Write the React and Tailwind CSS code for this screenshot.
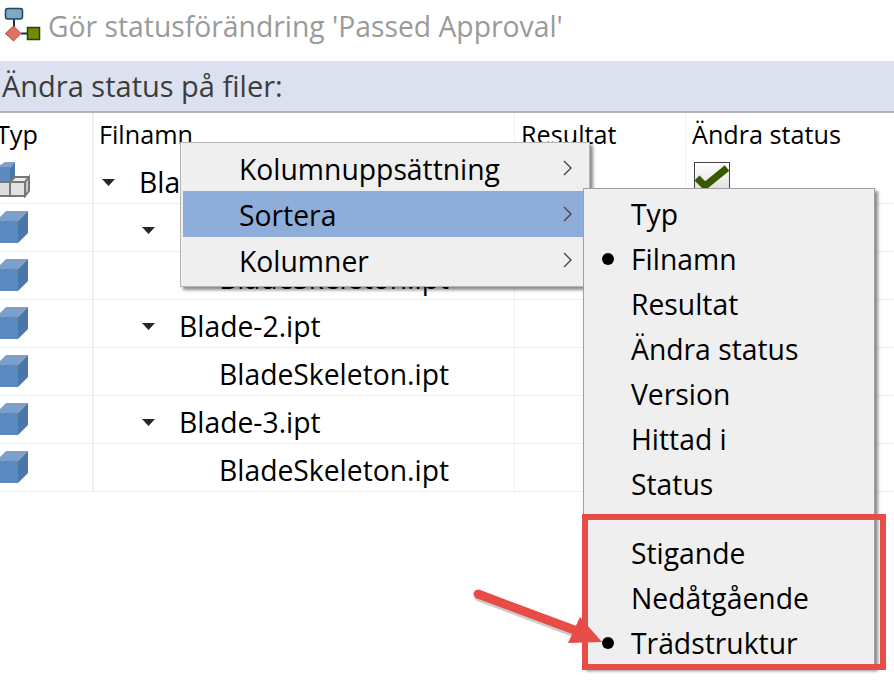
import React from "react";

const font = { fontFamily: '"Open Sans", "Noto Sans", sans-serif' };

const rows = [
  { level: 0, name: "Blade.iam", caret: true, assembly: true, check: true },
  { level: 1, name: "Blade-1.ipt", caret: true },
  { level: 2, name: "BladeSkeleton.ipt" },
  { level: 1, name: "Blade-2.ipt", caret: true },
  { level: 2, name: "BladeSkeleton.ipt" },
  { level: 1, name: "Blade-3.ipt", caret: true },
  { level: 2, name: "BladeSkeleton.ipt" },
];

const sortFields = ["Typ", "Filnamn", "Resultat", "Ändra status", "Version", "Hittad i", "Status"];
const sortOrders = ["Stigande", "Nedåtgående", "Trädstruktur"];

const WorkflowIcon = () => (
  <svg width="44" height="61" viewBox="0 0 44 61" className="shrink-0 block">
    <path d="M14 19V27M21 33.500H28" stroke="#17323a" strokeWidth="2" />
    <rect x="5.500" y="8.500" width="17" height="10.500" rx="2.500" fill="#7fa9c0" stroke="#1f4a60" strokeWidth="1.500" />
    <path d="M13.500 26L21 33.500L13.500 41L5.500 33.500Z" fill="#e0705f" stroke="#a5504a" strokeWidth="1" />
    <rect x="27.500" y="27.500" width="12" height="12" fill="#6f8d00" stroke="#2f3b10" strokeWidth="1.500" />
  </svg>
);

const PartIcon = () => (
  <svg width="28" height="32" viewBox="0 0 28 32" className="block mt-[1px]">
    <path d="M-4 10L6 0H28L18 10Z" fill="#7c9fcb" />
    <rect x="-4" y="10" width="22" height="22" fill="#5a8abf" />
    <path d="M18 10L28 0V22L18 32Z" fill="#4a76a8" />
  </svg>
);

const AssemblyIcon = () => (
  <svg width="30" height="36" viewBox="0 0 30 36" className="block">
    <path d="M-4 6L5 0H15L10 6Z" fill="#7c9fcb" />
    <rect x="-4" y="5" width="14" height="16" fill="#5a8abf" />
    <path d="M10 6L15 0V16L10 21Z" fill="#4a76a8" />
    <path d="M-2 20H10V34H-2Z" fill="#dcdcdc" stroke="#777" strokeWidth="2" />
    <path d="M10 20L15 15H29L25 20Z" fill="#eeeeee" stroke="#777" strokeWidth="2" />
    <path d="M10 20H25V34H10Z" fill="#e2e2e2" stroke="#777" strokeWidth="2" />
    <path d="M25 20L29 15V29L25 34Z" fill="#c8c8c8" stroke="#777" strokeWidth="2" />
  </svg>
);

const Caret = () => (
  <svg width="13" height="7" viewBox="0 0 13 7" className="block mt-[1px]">
    <path d="M0 0H13L6.500 7Z" fill="#262626" />
  </svg>
);

const Chevron = () => (
  <svg width="10" height="16" viewBox="0 0 10 16" className="block">
    <path d="M1 1L8 8L1 15" fill="none" stroke="#444" strokeWidth="1.400" />
  </svg>
);

const CheckBox = () => (
  <div className="w-[36px] h-[36px] border border-[#444] bg-gradient-to-b from-white to-[#d8d8d8]">
    <svg width="34" height="34" viewBox="0 0 34 34" className="block">
      <path d="M2 15L10 23L32 5" fill="none" stroke="#375a00" strokeWidth="7" />
    </svg>
  </div>
);

const Row = ({ row }) => (
  <div className="flex h-[48px] border-b border-[#eeeeee]">
    <div className="w-[94px] shrink-0 border-r-2 border-[#f0f0f0] pt-[6px]">
      {row.assembly ? <AssemblyIcon /> : <PartIcon />}
    </div>
    <div
      className="w-[421px] shrink-0 border-r border-[#f0f0f0] flex items-center pt-[5px] text-[28.3px] text-black"
      style={{ paddingLeft: 8 + row.level * 40 }}
    >
      <div className="w-[37px] shrink-0">{row.caret && <Caret />}</div>
      <span>{row.name}</span>
    </div>
    <div className="w-[171px] shrink-0 border-r border-[#f0f0f0]" />
    <div className="flex-1 pl-[8px] pt-[6px]">{row.check && <CheckBox />}</div>
  </div>
);

const MenuItem = ({ label, active }) => (
  <div className={`h-[46px] flex items-center justify-between pl-[56px] pr-[16px] text-[28.3px] text-black ${active ? "bg-[#8eadd8]" : ""}`}>
    <span className="pt-[2px]">{label}</span>
    <Chevron />
  </div>
);

const RadioItem = ({ label, selected }) => (
  <div className="h-[45px] flex items-center text-[28.3px] text-black">
    <div className="w-[47px] flex justify-end pr-[17px]">
      {selected && <div className="w-[12px] h-[12px] rounded-full bg-black" />}
    </div>
    <span className="pt-[2px]">{label}</span>
  </div>
);

export default function App() {
  return (
    <div className="relative w-[894px] h-[680px] overflow-hidden bg-white" style={font}>
      <div className="h-[61px] flex items-center">
        <WorkflowIcon />
        <span className="ml-[4px] pb-[9px] text-[28.3px] text-[#9a9a9a]">Gör statusförändring 'Passed Approval'</span>
      </div>
      <div className="h-[52px] bg-[#dbe1ef] border-b-2 border-[#b4b4b8] flex items-center pl-[2px] text-[29px] text-[#3c3c3c]">
        Ändra status på filer:
      </div>
      <div className="flex h-[43px] text-[25.2px] text-black">
        <div className="w-[94px] shrink-0 border-r-2 border-[#f0f0f0] flex items-center">
          <span className="-ml-[4px]">Typ</span>
        </div>
        <div className="w-[421px] shrink-0 border-r border-[#f0f0f0] flex items-center pl-[5px]">Filnamn</div>
        <div className="w-[171px] shrink-0 border-r border-[#f0f0f0] flex items-center pl-[6px]">Resultat</div>
        <div className="flex-1 flex items-center pl-[6px]">Ändra status</div>
      </div>
      {rows.map((row, i) => (
        <Row key={i} row={row} />
      ))}

      {/* context menu */}
      <div className="absolute left-[180px] top-[142px] w-[410px] h-[145px] bg-[#efefef] border border-[#b5b5b5] pl-[2px] pt-[2px] shadow-[3px_3px_3px_rgba(0,0,0,0.45)]">
        <MenuItem label="Kolumnuppsättning" />
        <MenuItem label="Sortera" active />
        <MenuItem label="Kolumner" />
      </div>

      {/* sort submenu */}
      <div className="absolute left-[583px] top-[188px] w-[292px] h-[480px] bg-[#efefef] border border-[#a0a0a0] pt-[2px] shadow-[3px_3px_3px_rgba(0,0,0,0.45)]">
        {sortFields.map((f) => (
          <RadioItem key={f} label={f} selected={f === "Filnamn"} />
        ))}
        <div className="h-[24px]" />
        {sortOrders.map((f) => (
          <RadioItem key={f} label={f} selected={f === "Trädstruktur"} />
        ))}
      </div>

      {/* annotation */}
      <div className="absolute left-[582px] top-[514px] w-[304px] h-[156px] border-[6px] border-[#e84c47]" />
      <svg className="absolute left-[465px] top-[580px]" width="140" height="80" viewBox="0 0 140 80">
        <path d="M13 14L112 51" stroke="rgba(0,0,0,0.2)" strokeWidth="9" strokeLinecap="round" transform="translate(1 3)" />
        <path d="M13 14L112 51" stroke="#e84c47" strokeWidth="9" strokeLinecap="round" />
        <path d="M137 62L103 63L115 37Z" fill="#e84c47" />
      </svg>
    </div>
  );
}
